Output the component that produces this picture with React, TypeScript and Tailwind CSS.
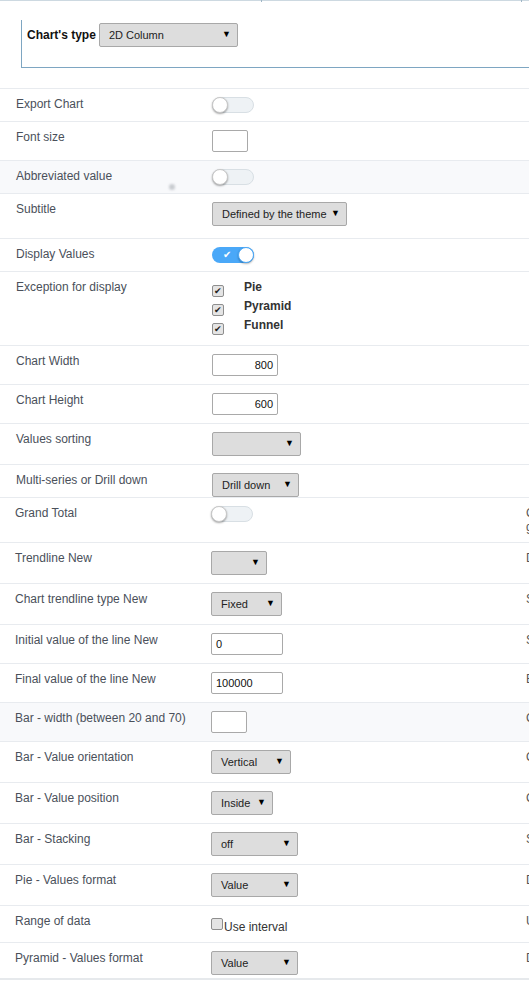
import React from "react";

const font = { fontFamily: '"Liberation Sans", Arial, sans-serif' };

function Select({ w, text }: { w: number; text?: string }) {
  return (
    <div
      className="h-[24px] flex items-center justify-between bg-[#dddddd] border border-[#a8a8a8] rounded-[2px] pl-[9px] pr-[6px] text-[11px] text-[#222] shrink-0"
      style={{ width: w }}
    >
      <span>{text ?? ""}</span>
      <span className="text-[9px] text-black">▼</span>
    </div>
  );
}

function Toggle({ on }: { on?: boolean }) {
  if (on) {
    return (
      <div className="relative w-[42px] h-[16px] rounded-full bg-[#4aa8f8] shrink-0">
        <span className="absolute left-[11px] top-[0px] text-[10px] leading-[16px] text-white">✔</span>
        <div className="absolute right-0 top-0 w-[16px] h-[16px] rounded-full bg-white border border-[#4aa8f8] shadow-[0_1px_2px_rgba(0,0,0,0.3)]" />
      </div>
    );
  }
  return (
    <div className="relative w-[42px] h-[16px] rounded-full bg-[#eef2f5] border border-[#d8dfe4] shrink-0">
      <div className="absolute left-[-1px] top-[-1px] w-[16px] h-[16px] rounded-full bg-white border border-[#c8c8c8] shadow-[0_1px_2px_rgba(0,0,0,0.35)]" />
    </div>
  );
}

function Input({ w, value, right }: { w: number; value?: string; right?: boolean }) {
  return (
    <div
      className={`h-[22px] bg-white border border-[#a9a9a9] rounded-[2px] text-[11px] text-[#111] flex items-center px-[4px] shrink-0 ${right ? "justify-end" : "justify-start"}`}
      style={{ width: w }}
    >
      {value ?? ""}
    </div>
  );
}

function Check({ checked }: { checked?: boolean }) {
  return (
    <div className="w-[12px] h-[12px] rounded-[2px] border border-[#8e8e8e] bg-[#e4e4e4] flex items-center justify-center shrink-0">
      {checked && <span className="text-[9px] leading-none text-[#222]">✔</span>}
    </div>
  );
}

type RowProps = {
  label: string;
  h: number;
  gray?: boolean;
  shift?: boolean;
  right?: React.ReactNode;
  children?: React.ReactNode;
  extra?: React.ReactNode;
};

function Row({ label, h, gray, shift, right, children, extra }: RowProps) {
  return (
    <div
      className={`relative flex items-start border-t border-[#e8ebef] ${gray ? "bg-[#f8f9fb]" : "bg-white"}`}
      style={{ height: h }}
    >
      <div
        className={`${shift ? "w-[211px] pl-[15px]" : "w-[212px] pl-[16px]"} pt-[8px] text-[12px] leading-[14px] text-[#4a505a] shrink-0`}
      >
        {label}
      </div>
      <div className={`${shift ? "w-[315px]" : "w-[314px]"} pt-[8px] shrink-0`}>{children}</div>
      {right && (
        <div className="pt-[8px] text-[12px] leading-[14px] text-[#555] whitespace-nowrap">{right}</div>
      )}
      {extra}
    </div>
  );
}

export default function App() {
  return (
    <div className="w-[529px] h-[983px] overflow-hidden bg-white relative" style={font}>
      <div className="h-px bg-[#cdd9e1] relative">
        <div className="absolute left-[261px] top-0 w-px h-[2px] bg-[#9fb6c6]" />
        <div className="absolute left-[521px] top-0 w-px h-[2px] bg-[#9fb6c6]" />
      </div>

      <div className="ml-[21px] mt-[19px] h-[48px] border-l border-b border-[#7ea6c2] flex items-start pl-[5px] pt-[3px]">
        <div className="flex items-center gap-[3px]">
          <span className="text-[12px] font-bold text-[#111]">Chart's type</span>
          <Select w={139} text="2D Column" />
        </div>
      </div>

      <div className="mt-[20px]">
        <Row label="Export Chart" h={33}>
          <Toggle />
        </Row>
        <Row label="Font size" h={39}>
          <Input w={36} />
        </Row>
        <Row
          label="Abbreviated value"
          h={33}
          gray
          extra={
            <div className="absolute left-[169px] top-[23px] w-[6px] h-[6px] rounded-full bg-[#c9ccd0] blur-[1px]" />
          }
        >
          <Toggle />
        </Row>
        <Row label="Subtitle" h={45}>
          <Select w={135} text="Defined by the theme" />
        </Row>
        <Row label="Display Values" h={33}>
          <Toggle on />
        </Row>
        <Row label="Exception for display" h={74}>
          <div className="flex flex-col">
            {["Pie", "Pyramid", "Funnel"].map((t) => (
              <div key={t} className="flex items-start h-[19px]">
                <div className="mt-[5px]">
                  <Check checked />
                </div>
                <span className="ml-[20px] text-[12px] leading-[14px] font-bold text-[#333]">{t}</span>
              </div>
            ))}
          </div>
        </Row>
        <Row label="Chart Width" h={39}>
          <Input w={66} value="800" right />
        </Row>
        <Row label="Chart Height" h={39}>
          <Input w={66} value="600" right />
        </Row>
        <Row label="Values sorting" h={41}>
          <Select w={89} />
        </Row>
        <Row label="Multi-series or Drill down" h={33}>
          <Select w={87} text="Drill down" />
        </Row>
        <Row
          label="Grand Total"
          h={45}
          shift
          right={
            <>
              <div>Calculate the</div>
              <div>grand total</div>
            </>
          }
        >
          <Toggle />
        </Row>
        <Row label="Trendline New" h={41} shift right="Display a trendline">
          <Select w={56} />
        </Row>
        <Row label="Chart trendline type New" h={41} shift right="Select the type">
          <Select w={71} text="Fixed" />
        </Row>
        <Row label="Initial value of the line New" h={39} shift right="Start value">
          <Input w={72} value="0" />
        </Row>
        <Row label="Final value of the line New" h={39} shift right="End value">
          <Input w={72} value="100000" />
        </Row>
        <Row label="Bar - width (between 20 and 70)" h={39} shift gray right="Column width">
          <Input w={36} />
        </Row>
        <Row label="Bar - Value orientation" h={41} shift right="Orientation">
          <Select w={80} text="Vertical" />
        </Row>
        <Row label="Bar - Value position" h={41} shift right="Choose position">
          <Select w={62} text="Inside" />
        </Row>
        <Row label="Bar - Stacking" h={41} shift right="Stacking">
          <Select w={87} text="off" />
        </Row>
        <Row label="Pie - Values format" h={41} shift right="Display format">
          <Select w={87} text="Value" />
        </Row>
        <Row label="Range of data" h={37} shift right="Use range">
          <div className="flex items-start pt-[4px]">
            <Check />
            <span className="text-[12px] leading-[14px] text-[#333] mt-[2px] ml-px">Use interval</span>
          </div>
        </Row>
        <Row label="Pyramid - Values format" h={36} shift right="Display format">
          <Select w={87} text="Value" />
        </Row>
        <div className="h-[2px] bg-[#e6e9ec]" />
      </div>
    </div>
  );
}
